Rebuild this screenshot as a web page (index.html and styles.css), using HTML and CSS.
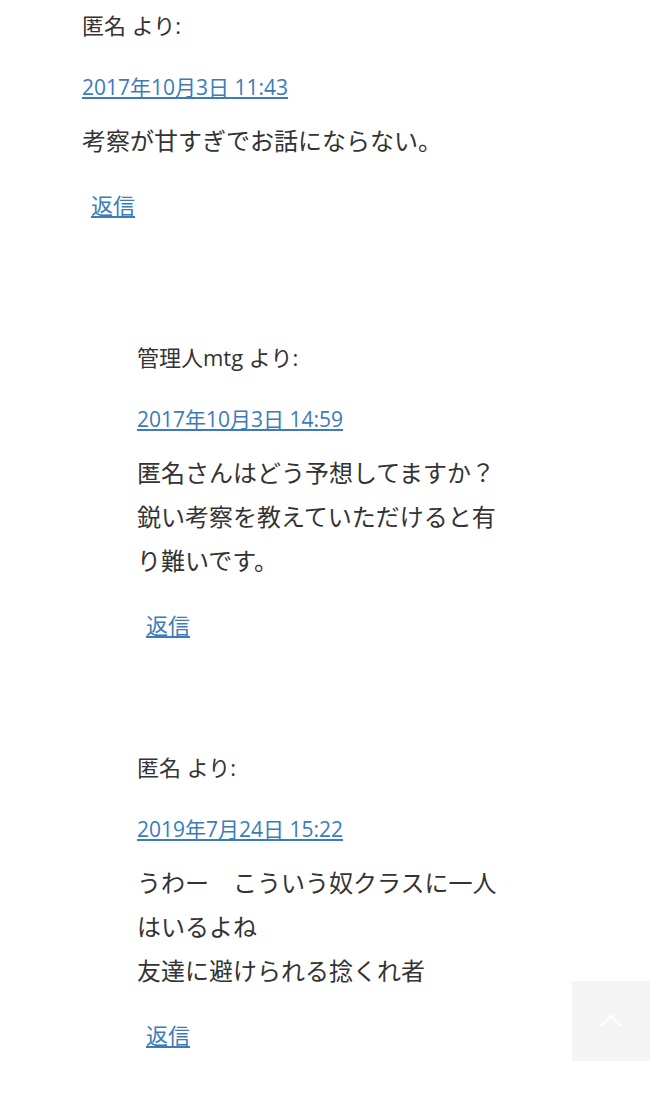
FILE: index.html
```html
<!DOCTYPE html>
<html lang="ja">
<head>
<meta charset="utf-8">
<title>コメント</title>
<link rel="stylesheet" href="styles.css">
</head>
<body>
<ol class="comment-list">
  <li class="comment">
    <p class="comment-author">匿名 より:</p>
    <p class="comment-meta"><a href="#">2017年10月3日 11:43</a></p>
    <div class="comment-body"><p>考察が甘すぎでお話にならない。</p></div>
    <p class="reply"><a href="#">返信</a></p>
    <ol class="children">
      <li class="comment">
        <p class="comment-author">管理人mtg より:</p>
        <p class="comment-meta"><a href="#">2017年10月3日 14:59</a></p>
        <div class="comment-body"><p>匿名さんはどう予想してますか？鋭い考察を教えていただけると有り難いです。</p></div>
        <p class="reply"><a href="#">返信</a></p>
      </li>
      <li class="comment">
        <p class="comment-author">匿名 より:</p>
        <p class="comment-meta"><a href="#">2019年7月24日 15:22</a></p>
        <div class="comment-body"><p>うわー　こういう奴クラスに一人はいるよね<br>友達に避けられる捻くれ者</p></div>
        <p class="reply"><a href="#">返信</a></p>
      </li>
    </ol>
  </li>
</ol>
<a class="to-top" href="#" aria-label="ページトップへ">
  <svg width="24" height="14" viewBox="0 0 24 14"><path d="M2 12 L12 2 L22 12" fill="none" stroke="#fff" stroke-width="2.5"/></svg>
</a>
</body>
</html>
```

FILE: styles.css
```css
html, body {
  margin: 0;
  padding: 0;
  background: #fff;
}
body {
  font-family: "Open Sans", "Noto Sans CJK JP", sans-serif;
  color: #333;
  padding: 10px 0 40px 82px;
}
.comment-list, .children {
  list-style: none;
  margin: 0;
  padding: 0;
}
.comment-list {
  width: 430px;
}
.children {
  margin-left: 55px;
  margin-top: 122px;
}
.children .comment + .comment {
  margin-top: 112px;
}
.comment-author {
  margin: 0;
  font-size: 22px;
  line-height: 30px;
}
.comment-meta {
  margin: 32px 0 0;
  font-size: 21px;
  line-height: 30px;
}
a {
  color: #3b7bbb;
  text-decoration: underline;
  text-underline-offset: 2px;
}
.comment-body {
  margin-top: 17px;
  font-size: 24px;
  line-height: 44px;
}
.comment-body p {
  margin: 0;
}
.reply {
  margin: 27px 0 0;
  padding-left: 9px;
  font-size: 22px;
  line-height: 30px;
}
.to-top {
  position: fixed;
  right: 0;
  bottom: 36px;
  width: 78px;
  height: 80px;
  background: #f4f4f4;
  display: flex;
  align-items: center;
  justify-content: center;
}
```
